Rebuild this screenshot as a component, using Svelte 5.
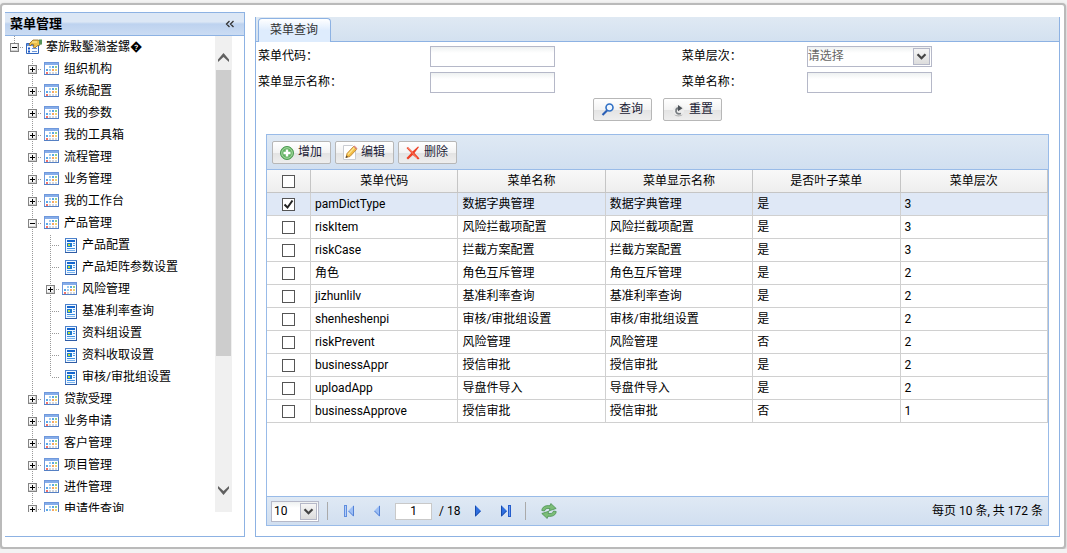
<script lang="ts">
  type Node = { label: string; kind: 'folder' | 'page'; open?: boolean; children?: Node[] };
  const folder = (label: string): Node => ({ label, kind: 'folder' });
  const page = (label: string): Node => ({ label, kind: 'page' });

  const tree: Node[] = [
    ...['组织机构', '系统配置', '我的参数', '我的工具箱', '流程管理', '业务管理', '我的工作台'].map(folder),
    {
      label: '产品管理',
      kind: 'folder',
      open: true,
      children: [
        page('产品配置'),
        page('产品矩阵参数设置'),
        folder('风险管理'),
        page('基准利率查询'),
        page('资料组设置'),
        page('资料收取设置'),
        page('审核/审批组设置')
      ]
    },
    ...['贷款受理', '业务申请', '客户管理', '项目管理', '进件管理', '申请件查询'].map(folder)
  ];

  const columns = ['菜单代码', '菜单名称', '菜单显示名称', '是否叶子菜单', '菜单层次'];
  let rows = $state([
    { on: true, cells: ['pamDictType', '数据字典管理', '数据字典管理', '是', '3'] },
    { on: false, cells: ['riskItem', '风险拦截项配置', '风险拦截项配置', '是', '3'] },
    { on: false, cells: ['riskCase', '拦截方案配置', '拦截方案配置', '是', '3'] },
    { on: false, cells: ['角色', '角色互斥管理', '角色互斥管理', '是', '2'] },
    { on: false, cells: ['jizhunlilv', '基准利率查询', '基准利率查询', '是', '2'] },
    { on: false, cells: ['shenheshenpi', '审核/审批组设置', '审核/审批组设置', '是', '2'] },
    { on: false, cells: ['riskPrevent', '风险管理', '风险管理', '否', '2'] },
    { on: false, cells: ['businessAppr', '授信审批', '授信审批', '是', '2'] },
    { on: false, cells: ['uploadApp', '导盘件导入', '导盘件导入', '是', '2'] },
    { on: false, cells: ['businessApprove', '授信审批', '授信审批', '否', '1'] }
  ]);
  const dots = [
    [5, 5, '#9ccbf0'], [8, 5, '#5aa8e6'], [11, 5, '#8ed08f'],
    [2, 8, '#5aa8e6'], [5, 8, '#9ccbf0'], [8, 8, '#f7a665'], [11, 8, '#f8d26a'],
    [2, 11, '#f0716a'], [5, 11, '#d3d6da'], [8, 11, '#d3d6da'], [11, 11, '#d3d6da']
  ] as const;
</script>

{#snippet expander(open: boolean)}
  <svg class="expander" viewBox="0 0 9 9" shape-rendering="crispEdges" aria-hidden="true">
    <rect width="9" height="9" fill="#848484" />
    <rect x="1" y="1" width="7" height="7" fill="#f7f7f7" />
    <path d="M1 7.500h7M7.500 1v7" stroke="#d2d2d2" />
    <path d={open ? 'M2 4.500h5' : 'M2 4.500h5M4.500 2v5'} stroke="#000" />
  </svg>
{/snippet}

{#snippet nodeIcon(kind: string)}
  {#if kind === 'folder'}
    <svg class="node-icon" viewBox="0 0 16 16" shape-rendering="crispEdges" aria-hidden="true">
      <path d="M0 1h15v13H0z" fill="#6f98dc" />
      <path d="M1 2h13v2H1z" fill="#86ade9" />
      <path d="M1 4h13v9H1z" fill="#fff" />
      <path d="M14 4h1v10H0v-1h14z" fill="#5580c4" />
      {#each dots as [x, y, fill]}
        <rect {x} {y} width="2" height="2" {fill} />
      {/each}
    </svg>
  {:else}
    <svg class="node-icon" viewBox="0 0 16 16" shape-rendering="crispEdges" aria-hidden="true">
      <path d="M3 1h12v15H3z" fill="#4c82cc" />
      <path d="M4 2h10v13H4z" fill="#f3f9ff" />
      <path d="M14 2h1v14H3v-1h11z" fill="#2f5ca5" />
      <path d="M5 3h8v2H5z" fill="#1466cf" />
      <path d="M5 6h5v4H5z" fill="#1e78cb" />
      <path d="M6 7h2v2H6z" fill="#b9df3b" />
      <path d="M11 6h2v1h-2zM11 8h2v1h-2z" fill="#4f9be8" />
      <path d="M5 11h8v1H5z" fill="#3f91e5" />
      <path d="M5 13h8v1H5z" fill="#7db6ee" />
    </svg>
  {/if}
{/snippet}

{#snippet branch(nodes: Node[])}
  <ul>
    {#each nodes as node}
      <li>
        <div class="node">
          {#if node.kind === 'folder'}
            <button class="toggle" aria-label={node.label}>{@render expander(!!node.open)}</button>
          {:else}
            <span class="toggle"></span>
          {/if}
          {@render nodeIcon(node.kind)}
          <a href="#menu">{node.label}</a>
        </div>
        {#if node.children}{@render branch(node.children)}{/if}
      </li>
    {/each}
  </ul>
{/snippet}

{#snippet pageArrow(flip: boolean, bar: boolean)}
  <svg class="arrow" class:flip viewBox="0 0 16 16" aria-hidden="true">
    <path d="M11 2v12L5 8z" fill={flip ? '#2f6fe0' : '#9dbff5'} />
    <path d="M10.500 3v10L5.500 8" fill="none" stroke={flip ? '#194ba9' : '#5482d6'} />
    {#if bar}
      <path d="M2.500 2v12" stroke={flip ? '#245dcc' : '#5f8ee0'} stroke-width="3" />
      <path d="M2.500 3v10" stroke={flip ? '#6d9cf0' : '#b5cdf5'} />
    {/if}
  </svg>
{/snippet}

{#snippet dropArrow()}
  <svg viewBox="0 0 17 17" aria-hidden="true"><path d="M4 6l4.500 4.500L13 6" fill="none" stroke="#444" stroke-width="2.500" /></svg>
{/snippet}

<div class="frame">
  <aside>
    <header>
      <h1>菜单管理</h1>
      <button class="collapse" aria-label="收起">
        <svg viewBox="0 0 10 8" aria-hidden="true"><path d="M4.500 1l-3 3 3 3M8.500 1l-3 3 3 3" fill="none" stroke="#333" stroke-width="1.300" /></svg>
      </button>
    </header>
    <div class="tree-area">
      <nav>
        <div class="node root">
          <button class="toggle" aria-label="根菜单">{@render expander(true)}</button>
          <svg class="node-icon" viewBox="0 0 16 16" aria-hidden="true">
            <path d="M.5 4.500h12v10H.5z" fill="#f8fbff" stroke="#3267bd" />
            <path d="M1 5h11v2H1z" fill="#5f90e1" />
            <path d="M2 9.500h2m-2 3h2" stroke="#1756c7" stroke-width="2" />
            <path d="M6 9.500h5m-5 3h5" stroke="#6c96dc" />
            <path d="M3 5l4-4h5l2 1v4l-3 1-2 2-2-1 1-2-2-1-2 2z" fill="#edc04a" stroke="#8c6520" stroke-width=".8" />
            <path d="M13 .5h3v5h-3z" fill="#57945a" />
            <path d="M6 3h5" stroke="#fff1a5" />
          </svg>
          <a href="#menu">搴旂敤鑿滃崟鏍�</a>
        </div>
        {@render branch(tree)}
      </nav>
      <div class="scroll" aria-hidden="true">
        <svg viewBox="0 0 11 9"><path d="M0 6.500L5.500 0 11 6.500V9L5.500 4 0 9z" fill="#606060" /></svg>
        <div class="thumb"></div>
        <svg class="down" viewBox="0 0 11 9"><path d="M0 6.500L5.500 0 11 6.500V9L5.500 4 0 9z" fill="#606060" /></svg>
      </div>
    </div>
  </aside>

  <main>
    <div class="tabs"><button class="tab">菜单查询</button></div>
    <form onsubmit={(e) => e.preventDefault()}>
      <label for="code">菜单代码：</label><input id="code" type="text" />
      <label for="level">菜单层次：</label>
      <span class="select">
        <select id="level"><option>请选择</option></select>
        {@render dropArrow()}
      </span>
      <label for="shown">菜单显示名称：</label><input id="shown" type="text" />
      <label for="name">菜单名称：</label><input id="name" type="text" />
      <div class="actions">
        <button class="btn">
          <svg viewBox="0 0 16 16" aria-hidden="true"><circle cx="9.500" cy="6.500" r="3.500" fill="#eef6ff" stroke="#2f6fc4" stroke-width="1.600" /><path d="M7 9.500L2.500 14" stroke="#2a5fb5" stroke-width="2.200" /></svg>
          查询
        </button>
        <button class="btn" type="reset">
          <svg viewBox="0 0 16 16" aria-hidden="true"><circle cx="8.500" cy="9.500" r="5.500" fill="#ececec" /><path d="M4 13.500c2 2.500 7 2.500 9 0-2 1-7 1-9 0z" fill="#b5b5b5" /><path d="M11 12.500c-3.500 1-5.500-.5-5-3C6.300 7.500 8 7 9 7" fill="none" stroke="#777c80" stroke-width="1.800" /><path d="M8 4l4.500 3.200L8 10.200z" fill="#4c5258" /></svg>
          重置
        </button>
      </div>
    </form>

    <section class="grid">
      <div class="toolbar">
        <button class="btn">
          <svg viewBox="0 0 16 16" aria-hidden="true"><circle cx="8" cy="9" r="6.500" fill="#65b365" stroke="#4a9a50" /><circle cx="8" cy="9" r="5.300" fill="none" stroke="#a5d7a0" /><path d="M8 5.500v7M4.500 9h7" stroke="#fff" stroke-width="2.400" /></svg>
          增加
        </button>
        <button class="btn">
          <svg viewBox="0 0 16 16" aria-hidden="true"><path d="M1.500 1.500h9l3 3v11h-12z" fill="#fff" stroke="#c9ccd2" /><path d="M4 13.500l1-4 6.500-7 3 3-6.500 7z" fill="#f2bd45" stroke="#b97b28" stroke-width=".8" /><path d="M6 10.500l6.500-7" stroke="#ffe691" stroke-width="1.200" /><path d="M11.500 2.500l1-1 3 3-1 1z" fill="#dd8580" /><path d="M3.500 14l1-2.500 1.500 1.500z" fill="#4a4035" /></svg>
          编辑
        </button>
        <button class="btn">
          <svg viewBox="0 0 16 16" aria-hidden="true"><path d="M1.500 4l1.500-1 4.500 4.500L13 2.500l1 .5-4.500 6 5 5.500-1.500 1L7.800 11l-4.800 4.500L1.500 14l4.700-5z" fill="#ee4126" /><path d="M3 4l9 10" stroke="#ff9178" stroke-width=".8" /></svg>
          删除
        </button>
      </div>
      <div class="table-area">
        <table>
          <colgroup><col class="check" /><col span="5" /></colgroup>
          <thead>
            <tr>
              <th><input type="checkbox" aria-label="全选" /></th>
              {#each columns as column}<th>{column}</th>{/each}
            </tr>
          </thead>
          <tbody>
            {#each rows as row}
              <tr class:on={row.on}>
                <td><input type="checkbox" bind:checked={row.on} aria-label={row.cells[0]} /></td>
                {#each row.cells as cell}<td>{cell}</td>{/each}
              </tr>
            {/each}
          </tbody>
        </table>
      </div>
      <footer>
        <span class="select size">
          <select aria-label="每页条数"><option>10</option></select>
          {@render dropArrow()}
        </span>
        <i></i>
        <button class="pager" aria-label="首页">{@render pageArrow(false, true)}</button>
        <button class="pager" aria-label="上一页">{@render pageArrow(false, false)}</button>
        <input class="page" type="text" value="1" aria-label="页码" />
        <span class="count">/ 18</span>
        <button class="pager" aria-label="下一页">{@render pageArrow(true, false)}</button>
        <button class="pager" aria-label="末页">{@render pageArrow(true, true)}</button>
        <i></i>
        <button class="pager" aria-label="刷新">
          <svg viewBox="0 0 16 16" aria-hidden="true">
            <g fill="#7cbd78" stroke="#3f8a47" stroke-width=".7">
              <path d="M.8 7.500C1 4 4.500 2 9 2.800l.8-2.300 5.400 5-7 2.300.8-2.200C6 5 4 5.800 3.500 8z" />
              <path d="M15.200 8.500C15 12 11.500 14 7 13.200l-.8 2.300-5.400-5 7-2.300-.8 2.200c3 .6 5-.2 5.500-2.400z" />
            </g>
          </svg>
        </button>
        <span class="total">每页 10 条, 共 172 条</span>
      </footer>
    </section>
  </main>
</div>

<style>
  :global(body) { margin: 0; background: #f3f3f3; }
  * { box-sizing: border-box; }
  .frame, button, input, select {
    font-family: Roboto, "Noto Sans CJK SC", sans-serif;
    font-size: 12px;
    line-height: 16px;
    color: #000;
  }
  .frame {
    display: flex;
    gap: 10px;
    height: calc(100vh - 7px);
    margin: 3px 1px 0 0;
    padding: 7px 4px 10px 3px;
    border: 2px solid #bababa;
    border-radius: 4px;
    background: #fff;
    box-shadow: 0 1px 3px #bbb;
  }
  button { padding: 0; border: 0; background: none; }
  a { color: inherit; text-decoration: none; white-space: nowrap; }
  aside { display: flex; flex-direction: column; flex: 0 0 240px; min-height: 0; border: 1px solid #8db2e3; border-left: 0; }
  header { display: flex; align-items: center; justify-content: space-between; flex: none; height: 23px; padding: 0 9px 0 5px; border-bottom: 1px solid #8db2e3; background: linear-gradient(#dce7f5 0 40%, #bdd2ef 50%, #cbdcf3); }
  h1 { margin: 0; font-size: 13px; line-height: 18px; }
  .collapse { display: flex; }
  .collapse svg { width: 10px; height: 8px; }
  .tree-area { display: flex; flex: 1; min-height: 0; margin: 0 12px 24px 0; overflow: hidden; }
  nav { flex: 1; padding-left: 5px; overflow: hidden; }
  ul { position: relative; margin: 0; padding: 0 0 0 18px; list-style: none; }
  ul::before { content: ""; position: absolute; left: 22px; top: 1px; bottom: 11px; width: 1px; background: repeating-linear-gradient(#999 0 1px, transparent 1px 2px); }
  .node { position: relative; display: flex; align-items: center; height: 22px; }
  .toggle { display: flex; flex: none; width: 14px; height: 22px; align-items: center; margin-right: 2px; background: linear-gradient(90deg, #999 50%, transparent 50%) 0 11px / 2px 1px repeat-x; background-clip: content-box; }
  span.toggle { padding-left: 5px; }
  .root .toggle { background: linear-gradient(90deg, #999 50%, transparent 50%) 0 11px / 2px 1px repeat-x, repeating-linear-gradient(#999 0 1px, transparent 1px 2px) 4px 0 / 1px 7px no-repeat; }
  .expander { width: 9px; height: 9px; }
  .node-icon { flex: none; width: 16px; height: 16px; margin-right: 4px; }
  .scroll { display: flex; flex-direction: column; align-items: center; flex: none; width: 17px; background: #f0f0f0; }
  .scroll svg { flex: none; width: 11px; height: 9px; margin: 17px 0 8px; }
  .scroll .down { margin: auto 0 17px; transform: rotate(180deg); }
  .thumb { width: 15px; height: 60%; background: #cdcdcd; }
  main { display: flex; flex: 1; flex-direction: column; min-width: 0; margin: 5px 0 0; border: 1px solid #8db2e3; border-top: 0; }
  .tabs { display: flex; align-items: flex-end; flex: none; height: 25px; padding-left: 2px; border-bottom: 1px solid #8db2e3; background: linear-gradient(#dfe9f3, #d3e1f0); }
  .tab { height: 24px; margin-bottom: -1px; padding: 0 12px 2px 11px; border: 1px solid #8db2e3; border-bottom: 0; border-radius: 4px 4px 0 0; background: linear-gradient(#fff, #deecfd 50%); color: #333; }
  form { display: grid; grid-template-columns: 21.5% 31.4% 15.6% 1fr; grid-auto-rows: 21px; row-gap: 5px; flex: none; padding: 4px 0 0 2px; }
  label { line-height: 20px; }
  input[type="text"], .select { width: 125px; height: 21px; border: 1px solid #b5b8c8; border-radius: 0; padding: 1px 3px; background: linear-gradient(#eef1f1, #fff 6px); }
  .select { position: relative; display: block; padding: 0; }
  select { width: 100%; height: 100%; padding: 0 0 2px; appearance: none; border: 0; background: none; color: #666; }
  .select svg { position: absolute; right: 1px; top: 1px; width: 17px; height: 17px; border: 1px solid #b5b8c8; background: linear-gradient(#f5f5f5, #ddd); pointer-events: none; }
  .actions { display: flex; grid-column: 1 / -1; justify-content: center; gap: 11px; padding-right: 2px; }
  .btn { display: flex; align-items: center; gap: 3px; width: 59px; height: 23px; padding: 0 5px 1px 6px; border: 1px solid #b7b7b7; border-radius: 2px; background: linear-gradient(#fff, #f3f3f3 50%, #e3e3e3 52%, #eee); white-space: nowrap; color: #1b1b35; }
  .btn svg { flex: none; width: 16px; height: 16px; }
  .grid { display: flex; flex: 1; flex-direction: column; min-height: 0; margin: 15px 10px 10px; border: 1px solid #99bbe8; }
  .toolbar { display: flex; align-items: center; gap: 4px; flex: none; height: 35px; padding-left: 5px; border-bottom: 1px solid #99bbe8; background: linear-gradient(#dfe9f4, #d1dff0); }
  .table-area { flex: 1; min-height: 0; overflow: hidden; }
  table { width: 100%; table-layout: fixed; border-collapse: separate; border-spacing: 0; }
  .check { width: 44px; }
  th, td { height: 23px; padding: 0 4px; border: solid #d0d0d0; border-width: 0 1px 1px 0; line-height: 16px; font-weight: 400; text-align: left; white-space: nowrap; }
  th { text-align: center; background: linear-gradient(#f9f9f9, #eee); border-color: #c5c5c5; }
  .on td { background: #dfe8f6; }
  input[type="checkbox"] { display: block; width: 13px; height: 13px; margin: 0 auto; appearance: none; border: 1px solid #555; background: #fff; }
  input[type="checkbox"]:checked { background: #fff url("data:image/svg+xml,%3Csvg xmlns='http://www.w3.org/2000/svg' viewBox='0 0 11 11'%3E%3Cpath d='M1.500 5.500l3 3 5-7' fill='none' stroke='%23222' stroke-width='2'/%3E%3C/svg%3E") center / 11px; }
  footer { display: flex; align-items: center; flex: none; height: 29px; padding: 0 5px 0 4px; border-top: 1px solid #99bbe8; background: linear-gradient(#dfe9f4, #d1dff0); }
  .size { width: 48px; }
  .size select { padding: 0 2px; color: #000; }
  footer i { width: 1px; height: 18px; margin: 0 10px 0 8px; background: #aaa; }
  .pager { display: flex; margin: 0 5px; }
  .pager svg { width: 16px; height: 16px; }
  .flip { transform: scaleX(-1); }
  footer input.page { width: 37px; height: 17px; margin: 0 7px 0 5px; border-color: #c9c9c9; text-align: center; background: #fff; }
  .count { margin-right: 5px; }
  .total { margin-left: auto; }
</style>
